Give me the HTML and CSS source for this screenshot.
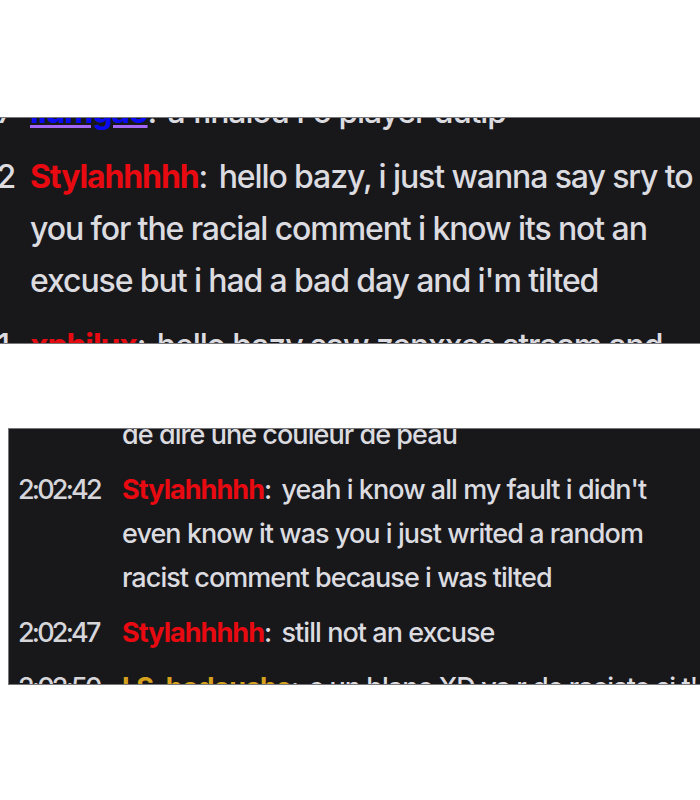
FILE: index.html
```html
<!DOCTYPE html>
<html lang="en">
<head>
  <meta charset="UTF-8">
  <title>Chat replay</title>
  <link rel="stylesheet" href="styles.css">
</head>
<body>

  <!-- first crop: zoomed in chat -->
  <div class="shot shot-top">
    <div class="chat-list">
      <div class="msg">
        <span class="time">2:01:27</span>
        <div class="text"><span class="name name-mention">Ilumgao</span><span class="colon">:</span> a finalou Fo player dutip</div>
      </div>
      <div class="msg">
        <span class="time">2:01:32</span>
        <div class="text"><span class="name name-red">Stylahhhhh</span><span class="colon">:</span> hello bazy, i just wanna say sry to you for the racial comment i know its not an excuse but i had a bad day and i'm tilted</div>
      </div>
      <div class="msg">
        <span class="time">2:01:41</span>
        <div class="text"><span class="name name-red">xphilux</span><span class="colon">:</span> hello bazy saw zenxxes stream and</div>
      </div>
    </div>
  </div>

  <!-- second crop -->
  <div class="shot shot-bottom">
    <div class="chat-list">
      <div class="msg">
        <span class="time"></span>
        <div class="text">de dire une couleur de peau</div>
      </div>
      <div class="msg">
        <span class="time">2:02:42</span>
        <div class="text"><span class="name name-red">Stylahhhhh</span><span class="colon">:</span> yeah i know all my fault i didn't even know it was you i just writed a random racist comment because i was tilted</div>
      </div>
      <div class="msg">
        <span class="time">2:02:47</span>
        <div class="text"><span class="name name-red">Stylahhhhh</span><span class="colon">:</span> still not an excuse</div>
      </div>
      <div class="msg">
        <span class="time">2:02:50</span>
        <div class="text nowrap"><span class="name name-gold">LS_bodouche</span><span class="colon">:</span> c un blanc XD va r de raciste si t'es noir</div>
      </div>
    </div>
  </div>

</body>
</html>
```

FILE: styles.css
```css
body {
  margin: 0;
  background: #ffffff;
  font-family: Inter, "Noto Sans", sans-serif;
  overflow: hidden;
}

.shot {
  overflow: hidden;
  background: #18181b;
  color: #dcdce0;
  box-sizing: border-box;
  font-weight: 500;
}

.chat-list {
  display: flex;
  flex-direction: column;
}

.msg {
  display: grid;
  align-items: start;
}

.time {
  white-space: nowrap;
}

.name {
  font-weight: 700;
}

.name-red {
  color: #e80a10;
}

.name-gold {
  color: #d6a21e;
}

.name-mention {
  color: #0a0af0;
  text-decoration: underline;
  text-decoration-color: #a268f5;
  text-decoration-thickness: 3px;
}

.colon {
  margin-right: 4px;
}

.nowrap {
  white-space: nowrap;
}

/* top crop */
.shot-top {
  margin-top: 117px;
  height: 227px;
  border-top: 1px solid #76767b;
  border-bottom: 1px solid #76767b;
  font-size: 32px;
  line-height: 52px;
  letter-spacing: -1.1px;
}

.shot-top .chat-list {
  gap: 13px;
  margin-top: -32px;
  margin-left: -90px;
}

.shot-top .msg {
  grid-template-columns: 98px 1fr;
  column-gap: 22px;
}

/* bottom crop */
.shot-bottom {
  margin: 84px 0 0 8px;
  height: 257px;
  border: 1px solid #76767b;
  border-right: none;
  font-size: 27px;
  line-height: 44px;
  letter-spacing: -0.95px;
}

.shot-bottom .chat-list {
  gap: 11px;
  margin-top: -16px;
  padding-left: 9px;
}

.shot-bottom .msg {
  grid-template-columns: 82px 1fr;
  column-gap: 22px;
}

.shot-bottom .time {
  color: #d6d6da;
  letter-spacing: -2.8px;
}
```
